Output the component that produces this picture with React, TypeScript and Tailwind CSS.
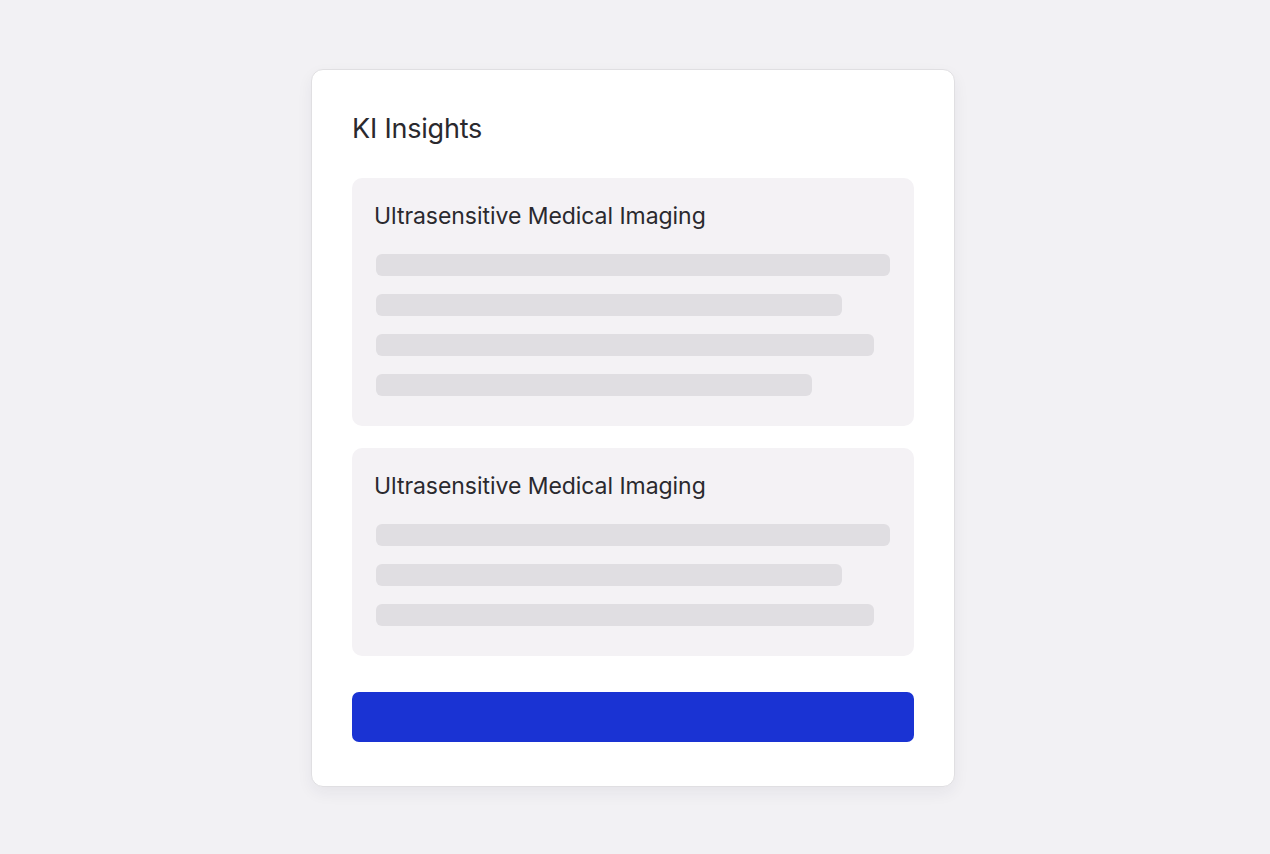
import React from "react";

const Bar = ({ w }: { w: number }) => (
  <div className="h-[22px] rounded-[6px] bg-[#e0dee2]" style={{ width: w }} />
);

const Box = ({ bars }: { bars: number[] }) => (
  <div className="rounded-[10px] bg-[#f4f2f5] pl-[22px] pr-[24px] pt-[23px] pb-[30px]">
    <div className="text-[23px] leading-[30px] text-[#2a292e] tracking-[-0.05px]">Ultrasensitive Medical Imaging</div>
    <div className="mt-[23px] flex flex-col gap-[18px] pl-[2px]">
      {bars.map((w, i) => (
        <Bar key={i} w={w} />
      ))}
    </div>
  </div>
);

export default function App() {
  return (
    <div
      className="min-h-[854px] w-full bg-[#f2f1f4] flex justify-center pt-[69px] pr-[4px]"
      style={{ fontFamily: "Inter, 'Noto Sans', sans-serif" }}
    >
      <div className="w-[644px] h-[718px] rounded-[12px] border border-[#e0dfe2] bg-white px-[40px] pt-[41px] pb-[44px] shadow-[0_6px_16px_rgba(40,30,60,0.06)] flex flex-col">
        <div className="text-[27px] leading-[36px] text-[#2a292e] tracking-[-0.2px]">KI Insights</div>
        <div className="mt-[31px] flex flex-col gap-[22px]">
          <Box bars={[514, 466, 498, 436]} />
          <Box bars={[514, 466, 498]} />
        </div>
        <div className="mt-[36px] h-[50px] rounded-[7px] bg-[#1a33d3]" />
      </div>
    </div>
  );
}
